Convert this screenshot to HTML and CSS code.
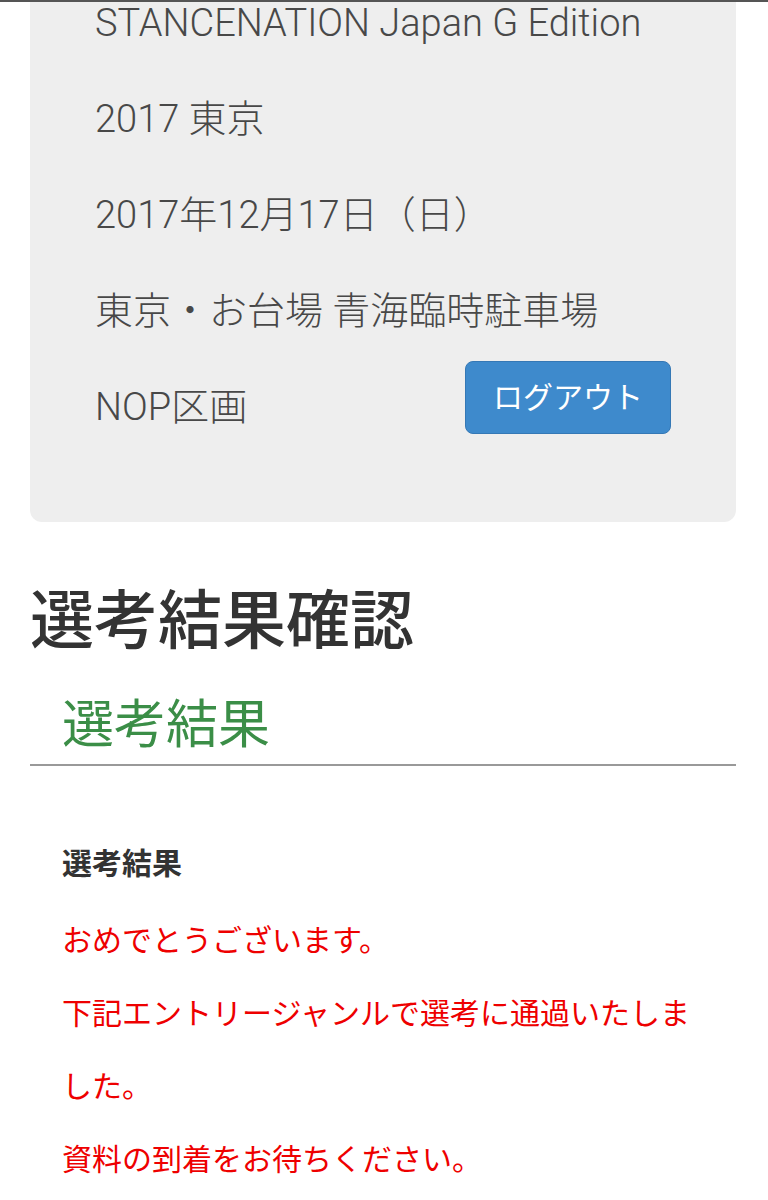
FILE: index.html
```html
<!DOCTYPE html>
<html lang="ja">
<head>
    <meta charset="UTF-8">
    <meta name="viewport" content="width=device-width, initial-scale=1.0">
    <title>選考結果確認</title>
    <link rel="stylesheet" href="styles.css">
</head>
<body>
    <div class="topbar"></div>

    <div class="wrap">
        <!-- Event info -->
        <div class="jumbo">
            <p>STANCENATION Japan G Edition</p>
            <p>2017 東京</p>
            <p>2017年12月17日（日）</p>
            <p>東京・お台場 青海臨時駐車場</p>
            <p class="last">NOP区画 <button type="button" class="btn-logout">ログアウト</button></p>
        </div>

        <h1>選考結果確認</h1>

        <div class="panel">
            <h2>選考結果</h2>
        </div>

        <!-- Result -->
        <div class="result">
            <h3>選考結果</h3>
            <p class="message">おめでとうございます。<br>下記エントリージャンルで選考に通過いたしました。<br>資料の到着をお待ちください。</p>
        </div>
    </div>
</body>
</html>
```

FILE: styles.css
```css
body {
    margin: 0;
    font-family: Roboto, "Noto Sans CJK JP", sans-serif;
    color: #333;
    background: #fff;
}

.topbar {
    position: relative;
    z-index: 1;
    height: 2px;
    background: #555;
}

.wrap {
    padding: 0 32px 0 30px;
}

.jumbo {
    display: flow-root;
    padding: 0 65px 67px;
    background: #eee;
    border-radius: 0 0 12px 12px;
}

.jumbo p {
    margin: 0;
    font-size: 38px;
    font-weight: 300;
    line-height: 96px;
    color: #484848;
}

.jumbo p:first-child {
    margin-top: -27px;
}

.btn-logout {
    float: right;
    margin-top: 2px;
    padding: 15px 27px;
    font-family: inherit;
    font-size: 30px;
    line-height: 41px;
    color: #fff;
    background: #3e8acc;
    border: 1px solid #3578b5;
    border-radius: 8px;
    cursor: pointer;
}

h1 {
    margin: 62px 0 0;
    font-size: 64px;
    font-weight: 500;
    line-height: 1.2;
    color: #333;
}

.panel {
    padding: 29px 32px 1px;
    border-bottom: 2px solid #999;
}

.panel h2 {
    margin: 0;
    font-size: 52px;
    font-weight: 400;
    line-height: 1.4;
    color: #3b8e47;
}

.result {
    padding: 77px 32px 0;
}

.result h3 {
    margin: 0;
    font-size: 30px;
    font-weight: 700;
    line-height: 1.4;
    color: #333;
}

.message {
    margin: 19px 0 0;
    font-size: 30px;
    line-height: 73px;
    color: #e00;
}
```
